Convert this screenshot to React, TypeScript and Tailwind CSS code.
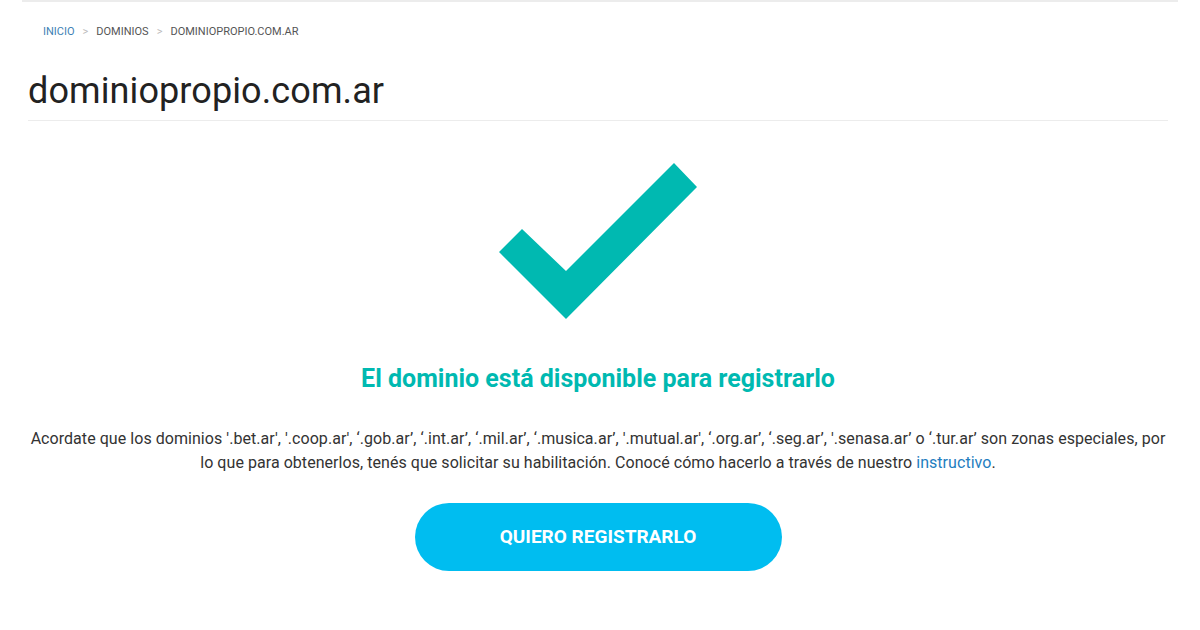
export default function App() {
  return (
    <div className="min-h-[630px] w-[1200px] bg-white font-['Roboto',sans-serif] text-[#333]">
      <div className="mx-[22px] border-t-2 border-[#ececec] pt-[20px]">
        <nav className="flex items-center gap-2 pl-[21px] text-[11px] uppercase leading-5 text-[#555]">
          <span className="text-[#3e81b4]">Inicio</span>
          <span className="text-[#bbb]">&gt;</span>
          <span>Dominios</span>
          <span className="text-[#bbb]">&gt;</span>
          <span>dominiopropio.com.ar</span>
        </nav>
      </div>

      <div className="mx-[28px] w-[1140px]">
        <h1 className="mt-[27px] border-b border-[#ececec] pb-[7px] text-[36px] font-normal leading-[44px] tracking-[0.1px] text-[#222]">
          dominiopropio.com.ar
        </h1>

        <div className="flex flex-col items-center">
          <svg viewBox="0 0 200 160" className="mt-[42px] h-[160px] w-[200px]" aria-hidden>
            <polygon points="1,89 24,66 68,108 176,0 199,24 68,156" fill="#00b9b1" />
          </svg>

          <h2 className="mt-[40px] text-[25px] font-bold leading-8 text-[#00b9b1]">
            El dominio está disponible para registrarlo
          </h2>

          <p className="mt-[32px] text-center text-[16px] leading-6 tracking-[0.05px] text-[#333]">
            Acordate que los dominios '.bet.ar', '.coop.ar', ‘.gob.ar’, ‘.int.ar’, ‘.mil.ar’, ‘.musica.ar’, '.mutual.ar', ‘.org.ar’, ‘.seg.ar’, '.senasa.ar’ o ‘.tur.ar’ son zonas especiales, por lo que para obtenerlos, tenés que solicitar su habilitación. Conocé cómo hacerlo a través de nuestro{' '}
            <a className="text-[#1f7ec0]">instructivo</a>.
          </p>

          <button
            type="button"
            className="mt-[28px] flex h-[68px] w-[367px] items-center justify-center rounded-full bg-[#00bdf0] text-[19px] font-bold uppercase text-white"
          >
            Quiero registrarlo
          </button>
        </div>
      </div>
    </div>
  )
}
